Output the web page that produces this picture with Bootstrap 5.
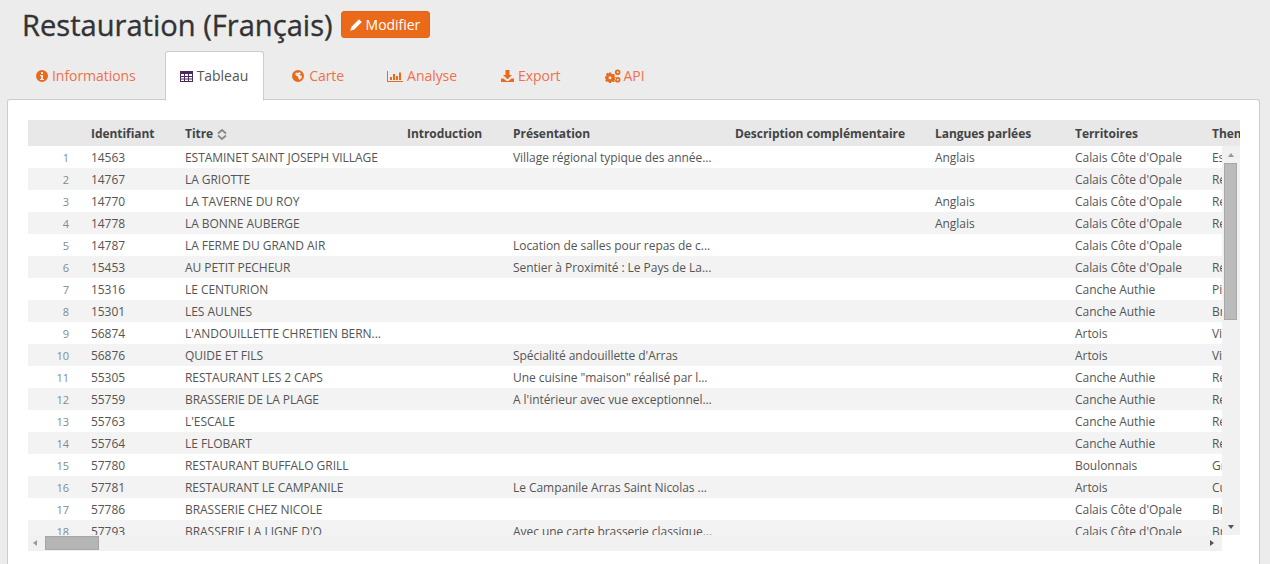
<!DOCTYPE html>
<html lang="fr"><head><meta charset="utf-8"><title>Restauration</title>
<link href="https://cdn.jsdelivr.net/npm/bootstrap@5.3.0/dist/css/bootstrap.min.css" rel="stylesheet">
<style>
html,body{height:564px;overflow:hidden}
body{background:#ececec;font-family:"Open Sans",sans-serif;color:#555;font-size:12px;letter-spacing:-.05px}
.page{height:564px;padding:0 10px 0 7px;display:flex;flex-direction:column}
.head{padding:11px 0 0 15px;height:51px;display:flex;align-items:flex-start;gap:8px}
.head h1{font-family:"Open Sans",sans-serif;font-size:29.1px;font-weight:500;letter-spacing:0;color:#333;margin:-5px 0 0;line-height:38px;-webkit-text-stroke:.35px #333}
.btn-edit{background:#ea6a1a;color:#fff;border:1px solid #e4651a;border-radius:3px;font-size:14px;height:27px;width:89px;padding:0 0 0 8px;line-height:25px;display:flex;align-items:center;justify-content:flex-start;gap:4px}
.btn-edit:hover{background:#ea6a1a;color:#fff}
.tabs{border-bottom:0;padding-left:8px;height:49px;flex-wrap:nowrap}
.tabs .nav-link{font-size:14px;color:#f0704a;height:49px;padding:14px 20px 0;border-radius:3px 3px 0 0;border:1px solid transparent;display:flex;align-items:flex-start;gap:4px;line-height:20px;white-space:nowrap}
.tabs .nav-link svg{margin-top:3px;flex:none;fill:#e96a1a}
.tabs .nav-link.active{color:#555;background:#fff;border-color:#ccc #ccc #fff;height:50px;padding-left:14px;padding-right:15px;position:relative;z-index:1}
.tabs .nav-link.active svg{fill:#4a2a5c}
.tabs .tab-carte{gap:5px;padding-right:21px;margin-left:7px}
.tabs .tab-analyse{padding-right:22px}
.tabs .tab-export{padding-right:22px}
.tabs .tab-api{gap:3px}
.panel{flex:1;background:#fff;border:1px solid #ccc;border-width:1px 1px 0;margin-top:-1px;border-radius:3px 3px 0 0;padding:20px 20px 0;min-height:0}
.tw{width:1212px}
.hdr{height:26px;background:#e8e8e8;overflow:hidden}
.bodyline{display:flex;height:389px}
.viewport{width:1194px;overflow:hidden}
.grid{table-layout:fixed;width:1400px;border-collapse:collapse;margin:0;font-size:12px}
.grid td,.grid th{padding:2px 0 0 10px;white-space:nowrap;overflow:hidden;height:22px;line-height:20px;color:#555;font-weight:400;background:transparent;border:0}
.grid th{height:26px;line-height:24px;font-weight:700;color:#444}
.grid .num{padding:2px 12px 0 0;text-align:right;color:#7c8c96;font-size:11px}
.grid tr:nth-child(even) td{background:#f3f3f3}
.sorter{display:inline-block;vertical-align:-2px;margin-left:1px}
.vtrack{width:18px;background:#f1f1f1;display:flex;flex-direction:column;align-items:center;padding:0 2px 0 1px}
.vthumb{width:13px;height:157px;background:#bbb;border:1px solid #a8a8a8;margin:0 0 auto 0}
.arr{width:0;height:0;border-style:solid;flex:none}
.arr-up{border-width:0 3.5px 4px;border-color:transparent transparent #999;margin:7px 0 6px}
.arr-down{border-width:4px 3.5px 0;border-color:#555 transparent transparent;margin:0 0 6px}
.htrack{width:1194px;height:16px;background:#f1f1f1;display:flex;align-items:center}
.hthumb{width:54px;height:14px;background:#b5b5b5;border:1px solid #a5a5a5;margin-left:4px}
.arr-left{border-width:3.5px 4px 3.5px 0;border-color:transparent #999 transparent transparent;margin-left:5px;margin-right:4px}
.arr-right{border-width:3.5px 0 3.5px 4px;border-color:transparent transparent transparent #555;margin-left:auto;margin-right:8px}
</style></head>
<body>
<div class="page">
  <div class="head">
    <h1>Restauration (Français)</h1>
    <a class="btn btn-edit" href="#"><svg width="12" height="12" viewBox="0 0 12 12" fill="#fff"><path d="M9 .2 11.800 3 4.300 10.500.2 11.800 1.500 7.700Z"/></svg>Modifier</a>
  </div>
  <ul class="nav nav-tabs tabs">
    <li class="nav-item"><a class="nav-link" href="#"><svg width="12" height="14" viewBox="0 0 12 14"><path fill-rule="evenodd" d="M6 1a6 6 0 1 1 0 12A6 6 0 0 1 6 1ZM5 3v2h2V3ZM4 6v1h1v3H4v1h4v-1H7V6Z"/></svg>Informations</a></li>
    <li class="nav-item ms-2"><a class="nav-link active" href="#"><svg width="13" height="14" viewBox="0 0 13 14"><path fill-rule="evenodd" d="M0 2h13v11H0ZM1 5v2h3V5Zm4 0v2h3V5Zm4 0v2h3V5ZM1 8v1.500h3V8Zm4 0v1.500h3V8Zm4 0v1.500h3V8ZM1 10.500V12h3v-1.500Zm4 0V12h3v-1.500Zm4 0V12h3v-1.500Z"/></svg>Tableau</a></li>
    <li class="nav-item"><a class="nav-link tab-carte" href="#"><svg width="12" height="14" viewBox="0 0 12 14"><path fill-rule="evenodd" d="M6 1a6 6 0 1 1 0 12A6 6 0 0 1 6 1ZM7.500 3 6 4 4.500 3.500 3 5l1.500 2L6 7.500l.5 2 1 1.500L9.500 9 10 7 8.500 6.500 7.500 5.500 9 4.500Z"/></svg>Carte</a></li>
    <li class="nav-item"><a class="nav-link tab-analyse" href="#"><svg width="16" height="14" viewBox="0 0 16 14"><path d="M0 2h1v10h15v1H0ZM3 8h2v3H3ZM6 5h2v6H6ZM9 7h2v4H9ZM12 3.500h2V11h-2Z"/></svg>Analyse</a></li>
    <li class="nav-item"><a class="nav-link tab-export" href="#"><svg width="13" height="14" viewBox="0 0 13 14"><path d="M4.500 1h4v5H11L6.500 10.300 2 6h2.500ZM0 9.500h2.500L5.500 12h2l3-2.500H13V13H0Z"/></svg>Export</a></li>
    <li class="nav-item"><a class="nav-link tab-api" href="#"><svg width="16" height="14" viewBox="0 0 16 14"><path fill-rule="evenodd" d="M4 3.500h2l.3 1.200 1 .5L8.500 4.700 10 6.200l-.7 1 .5 1 1.200.3v2l-1.200.2-.5 1 .7 1L8.500 13l-1.100-.6-1.100.5L6 14H4l-.3-1.100-1-.5-1.100.6L.2 11.500l.7-1-.5-1L0 9.500v-2l1.200-.3.400-1-.7-1L2.400 3.800l1.200.7.300-.1ZM5 7.200a1.500 1.500 0 1 0 0 3 1.500 1.500 0 0 0 0-3ZM12.700.5a2.800 2.800 0 1 1 0 5.600 2.800 2.800 0 0 1 0-5.600ZM12.700 2.300a1 1 0 1 0 0 2 1 1 0 0 0 0-2ZM12.700 8a2.800 2.800 0 1 1 0 5.600 2.800 2.800 0 0 1 0-5.600ZM12.700 9.800a1 1 0 1 0 0 2 1 1 0 0 0 0-2Z"/></svg>API</a></li>
  </ul>
  <div class="panel">
    <div class="tw">
      <div class="hdr">
        <table class="table grid"><colgroup><col style="width:53px"><col style="width:94px"><col style="width:222px"><col style="width:106px"><col style="width:222px"><col style="width:200px"><col style="width:140px"><col style="width:137px"><col></colgroup>
        <thead><tr><th></th><th>Identifiant</th><th>Titre <svg class="sorter" width="10" height="11" viewBox="0 0 10 11" fill="none" stroke="#888" stroke-width="1.800"><path d="M1 4.500 5 1 9 4.500M1 6.500 5 10 9 6.500"/></svg></th><th>Introduction</th><th>Présentation</th><th>Description complémentaire</th><th>Langues parlées</th><th>Territoires</th><th>Thematique</th></tr></thead></table>
      </div>
      <div class="bodyline">
        <div class="viewport">
          <table class="table grid"><colgroup><col style="width:53px"><col style="width:94px"><col style="width:222px"><col style="width:106px"><col style="width:222px"><col style="width:200px"><col style="width:140px"><col style="width:137px"><col></colgroup>
          <tbody>
<tr><td class="num">1</td><td>14563</td><td>ESTAMINET SAINT JOSEPH VILLAGE</td><td></td><td>Village régional typique des année...</td><td></td><td>Anglais</td><td>Calais Côte d'Opale</td><td>Estaminet</td></tr>
<tr><td class="num">2</td><td>14767</td><td>LA GRIOTTE</td><td></td><td></td><td></td><td></td><td>Calais Côte d'Opale</td><td>Restaurant</td></tr>
<tr><td class="num">3</td><td>14770</td><td>LA TAVERNE DU ROY</td><td></td><td></td><td></td><td>Anglais</td><td>Calais Côte d'Opale</td><td>Restaurant</td></tr>
<tr><td class="num">4</td><td>14778</td><td>LA BONNE AUBERGE</td><td></td><td></td><td></td><td>Anglais</td><td>Calais Côte d'Opale</td><td>Restaurant</td></tr>
<tr><td class="num">5</td><td>14787</td><td>LA FERME DU GRAND AIR</td><td></td><td>Location de salles pour repas de c...</td><td></td><td></td><td>Calais Côte d'Opale</td><td></td></tr>
<tr><td class="num">6</td><td>15453</td><td>AU PETIT PECHEUR</td><td></td><td>Sentier à Proximité : Le Pays de La...</td><td></td><td></td><td>Calais Côte d'Opale</td><td>Restaurant</td></tr>
<tr><td class="num">7</td><td>15316</td><td>LE CENTURION</td><td></td><td></td><td></td><td></td><td>Canche Authie</td><td>Pizzeria</td></tr>
<tr><td class="num">8</td><td>15301</td><td>LES AULNES</td><td></td><td></td><td></td><td></td><td>Canche Authie</td><td>Brasserie</td></tr>
<tr><td class="num">9</td><td>56874</td><td>L'ANDOUILLETTE CHRETIEN BERN...</td><td></td><td></td><td></td><td></td><td>Artois</td><td>Viande</td></tr>
<tr><td class="num">10</td><td>56876</td><td>QUIDE ET FILS</td><td></td><td>Spécialité andouillette d'Arras</td><td></td><td></td><td>Artois</td><td>Viande</td></tr>
<tr><td class="num">11</td><td>55305</td><td>RESTAURANT LES 2 CAPS</td><td></td><td>Une cuisine "maison" réalisé par l...</td><td></td><td></td><td>Canche Authie</td><td>Restaurant</td></tr>
<tr><td class="num">12</td><td>55759</td><td>BRASSERIE DE LA PLAGE</td><td></td><td>A l'intérieur avec vue exceptionnel...</td><td></td><td></td><td>Canche Authie</td><td>Restaurant</td></tr>
<tr><td class="num">13</td><td>55763</td><td>L'ESCALE</td><td></td><td></td><td></td><td></td><td>Canche Authie</td><td>Restaurant</td></tr>
<tr><td class="num">14</td><td>55764</td><td>LE FLOBART</td><td></td><td></td><td></td><td></td><td>Canche Authie</td><td>Restaurant</td></tr>
<tr><td class="num">15</td><td>57780</td><td>RESTAURANT BUFFALO GRILL</td><td></td><td></td><td></td><td></td><td>Boulonnais</td><td>Grill</td></tr>
<tr><td class="num">16</td><td>57781</td><td>RESTAURANT LE CAMPANILE</td><td></td><td>Le Campanile Arras Saint Nicolas ...</td><td></td><td></td><td>Artois</td><td>Cuisine</td></tr>
<tr><td class="num">17</td><td>57786</td><td>BRASSERIE CHEZ NICOLE</td><td></td><td></td><td></td><td></td><td>Calais Côte d'Opale</td><td>Brasserie</td></tr>
<tr><td class="num">18</td><td>57793</td><td>BRASSERIE LA LIGNE D'O</td><td></td><td>Avec une carte brasserie classique...</td><td></td><td></td><td>Calais Côte d'Opale</td><td>Brasserie</td></tr>
          </tbody></table>
        </div>
        <div class="vtrack"><span class="arr arr-up"></span><div class="vthumb"></div><span class="arr arr-down"></span></div>
      </div>
      <div class="htrack"><span class="arr arr-left"></span><div class="hthumb"></div><span class="arr arr-right"></span></div>
    </div>
  </div>
</div>
<script src="https://cdn.jsdelivr.net/npm/bootstrap@5.3.0/dist/js/bootstrap.bundle.min.js"></script>
</body></html>
